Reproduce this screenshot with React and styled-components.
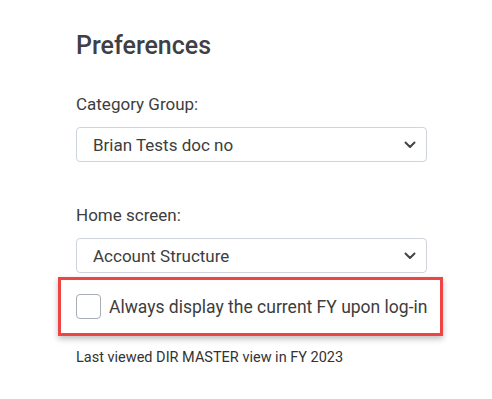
import React from 'react';
import styled, { createGlobalStyle } from 'styled-components';

const GlobalStyle = createGlobalStyle`
  html, body {
    margin: 0;
    padding: 0;
    background: #fff;
  }
  body {
    font-family: Roboto, "Liberation Sans", sans-serif;
    color: #3d3d3d;
  }
`;

const Page = styled.div`
  width: 492px;
  height: 399px;
  box-sizing: border-box;
  padding: 31px 0 0 76px;
`;

const Panel = styled.div`
  width: 351px;
  display: flex;
  flex-direction: column;
`;

const Title = styled.h2`
  margin: 0 0 32px 0;
  font-size: 25px;
  font-weight: 500;
  line-height: 30px;
  color: #3f3f46;
`;

const Label = styled.div`
  font-size: 17px;
  line-height: 22px;
  color: #3d3d3d;
  margin-bottom: 12px;
`;

const SelectBox = styled.div`
  height: 35px;
  box-sizing: border-box;
  border: 1px solid #ced4da;
  border-radius: 4px;
  display: flex;
  align-items: center;
  justify-content: space-between;
  padding: 0 10px 0 16px;
  font-size: 17px;
  color: #3d3d3d;
  margin-bottom: ${p => p.gap || 0}px;
`;

const Chevron = () => (
  <svg width="12" height="8" viewBox="0 0 12 8">
    <path d="M1.5 1.5 L6 6 L10.5 1.5" fill="none" stroke="#444" strokeWidth="2" strokeLinecap="round" strokeLinejoin="round" />
  </svg>
);

const Highlight = styled.label`
  margin: 4px 0 0 -18px;
  width: 385px;
  height: 59px;
  box-sizing: border-box;
  border: 3px solid #ef4444;
  box-shadow: 0 3px 6px rgba(0, 0, 0, 0.25);
  display: flex;
  align-items: center;
  gap: 8px;
  padding-left: 15px;
  font-size: 17.5px;
  color: #3d3d3d;
`;

const Check = styled.span`
  width: 25px;
  height: 25px;
  box-sizing: border-box;
  border: 1px solid #a8adb3;
  border-radius: 4px;
  background: #fff;
  flex: none;
`;

const Note = styled.div`
  margin-top: 13px;
  font-size: 14.5px;
  color: #333;
`;

export default function App() {
  return (
    <Page>
      <GlobalStyle />
      <Panel>
        <Title>Preferences</Title>
        <Label>Category Group:</Label>
        <SelectBox gap={42}>
          <span>Brian Tests doc no</span>
          <Chevron />
        </SelectBox>
        <Label>Home screen:</Label>
        <SelectBox>
          <span>Account Structure</span>
          <Chevron />
        </SelectBox>
        <Highlight>
          <Check />
          <span>Always display the current FY upon log-in</span>
        </Highlight>
        <Note>Last viewed DIR MASTER view in FY 2023</Note>
      </Panel>
    </Page>
  );
}
